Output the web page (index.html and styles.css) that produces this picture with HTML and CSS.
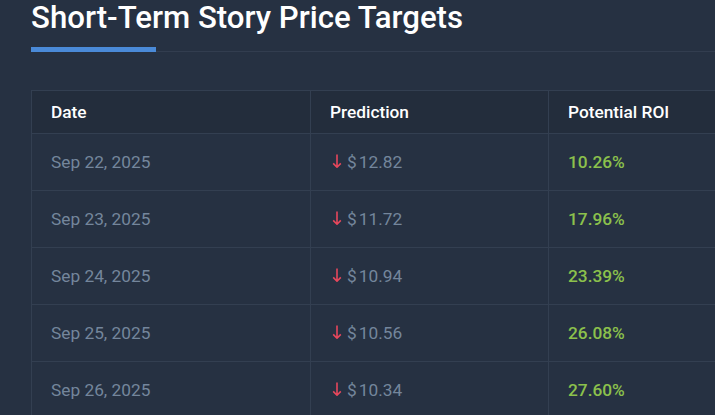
FILE: index.html
```html
<!DOCTYPE html>
<html>
<head>
<meta charset="utf-8">
<link rel="stylesheet" href="styles.css">
</head>
<body>
<div class="page">
  <div class="heading">
    <h1 class="title">Short-Term Story Price Targets</h1>
  </div>
  <table class="targets">
    <colgroup>
      <col class="c-date"><col class="c-pred"><col class="c-roi">
    </colgroup>
    <thead>
      <tr><th>Date</th><th>Prediction</th><th>Potential ROI</th></tr>
    </thead>
    <tbody>
      <tr><td class="date">Sep 22, 2025</td><td class="pred"><svg class="arrow" viewBox="0 0 10 14"><path d="M5 0.5V13.2M1.2 9.4L5 13.2L8.8 9.4" /></svg><span class="cur">$</span>12.82</td><td class="roi">10.26%</td></tr>
      <tr><td class="date">Sep 23, 2025</td><td class="pred"><svg class="arrow" viewBox="0 0 10 14"><path d="M5 0.5V13.2M1.2 9.4L5 13.2L8.8 9.4" /></svg><span class="cur">$</span>11.72</td><td class="roi">17.96%</td></tr>
      <tr><td class="date">Sep 24, 2025</td><td class="pred"><svg class="arrow" viewBox="0 0 10 14"><path d="M5 0.5V13.2M1.2 9.4L5 13.2L8.8 9.4" /></svg><span class="cur">$</span>10.94</td><td class="roi">23.39%</td></tr>
      <tr><td class="date">Sep 25, 2025</td><td class="pred"><svg class="arrow" viewBox="0 0 10 14"><path d="M5 0.5V13.2M1.2 9.4L5 13.2L8.8 9.4" /></svg><span class="cur">$</span>10.56</td><td class="roi">26.08%</td></tr>
      <tr><td class="date">Sep 26, 2025</td><td class="pred"><svg class="arrow" viewBox="0 0 10 14"><path d="M5 0.5V13.2M1.2 9.4L5 13.2L8.8 9.4" /></svg><span class="cur">$</span>10.34</td><td class="roi">27.60%</td></tr>
    </tbody>
  </table>
</div>
</body>
</html>
```
FILE: styles.css
```css
html, body {
  margin: 0;
  padding: 0;
  background: #263142;
  overflow: hidden;
}
body {
  font-family: Roboto, "Liberation Sans", sans-serif;
  color: #ffffff;
}
.page {
  padding: 0 0 0 31px;
  width: 1000px;
}
.heading {
  position: relative;
  padding-bottom: 15px;
  border-bottom: 1px solid #323d4f;
}
.heading::after {
  content: "";
  position: absolute;
  left: 0;
  bottom: -1px;
  width: 125px;
  height: 5px;
  background: #4a8ad8;
}
.title {
  margin: 0;
  font-size: 31.2px;
  font-weight: 500;
  line-height: 36px;
  color: #ffffff;
  white-space: nowrap;
}
.targets {
  margin-top: 38px;
  border-collapse: collapse;
  table-layout: fixed;
  width: 860px;
  font-size: 17.3px;
}
.c-date { width: 279px; }
.c-pred { width: 238px; }
.c-roi { width: 343px; }
.targets th, .targets td {
  border: 1px solid #333f51;
  text-align: left;
  line-height: 18px;
  padding: 12px 19px;
}
.targets th {
  background: #232d3c;
  font-weight: 500;
  color: #ffffff;
}
.targets td {
  padding: 19px 19px;
}
.date {
  color: #74869c;
}
.pred {
  color: #74869c;
  padding-left: 21px !important;
}
.arrow {
  width: 10px;
  height: 14px;
  vertical-align: 0;
  margin-right: 5px;
  fill: none;
  stroke: #e7475c;
  stroke-width: 1.6;
}
.cur {
  margin-right: 2px;
}
.roi {
  color: #8cc14c;
  font-weight: 500;
}
```
